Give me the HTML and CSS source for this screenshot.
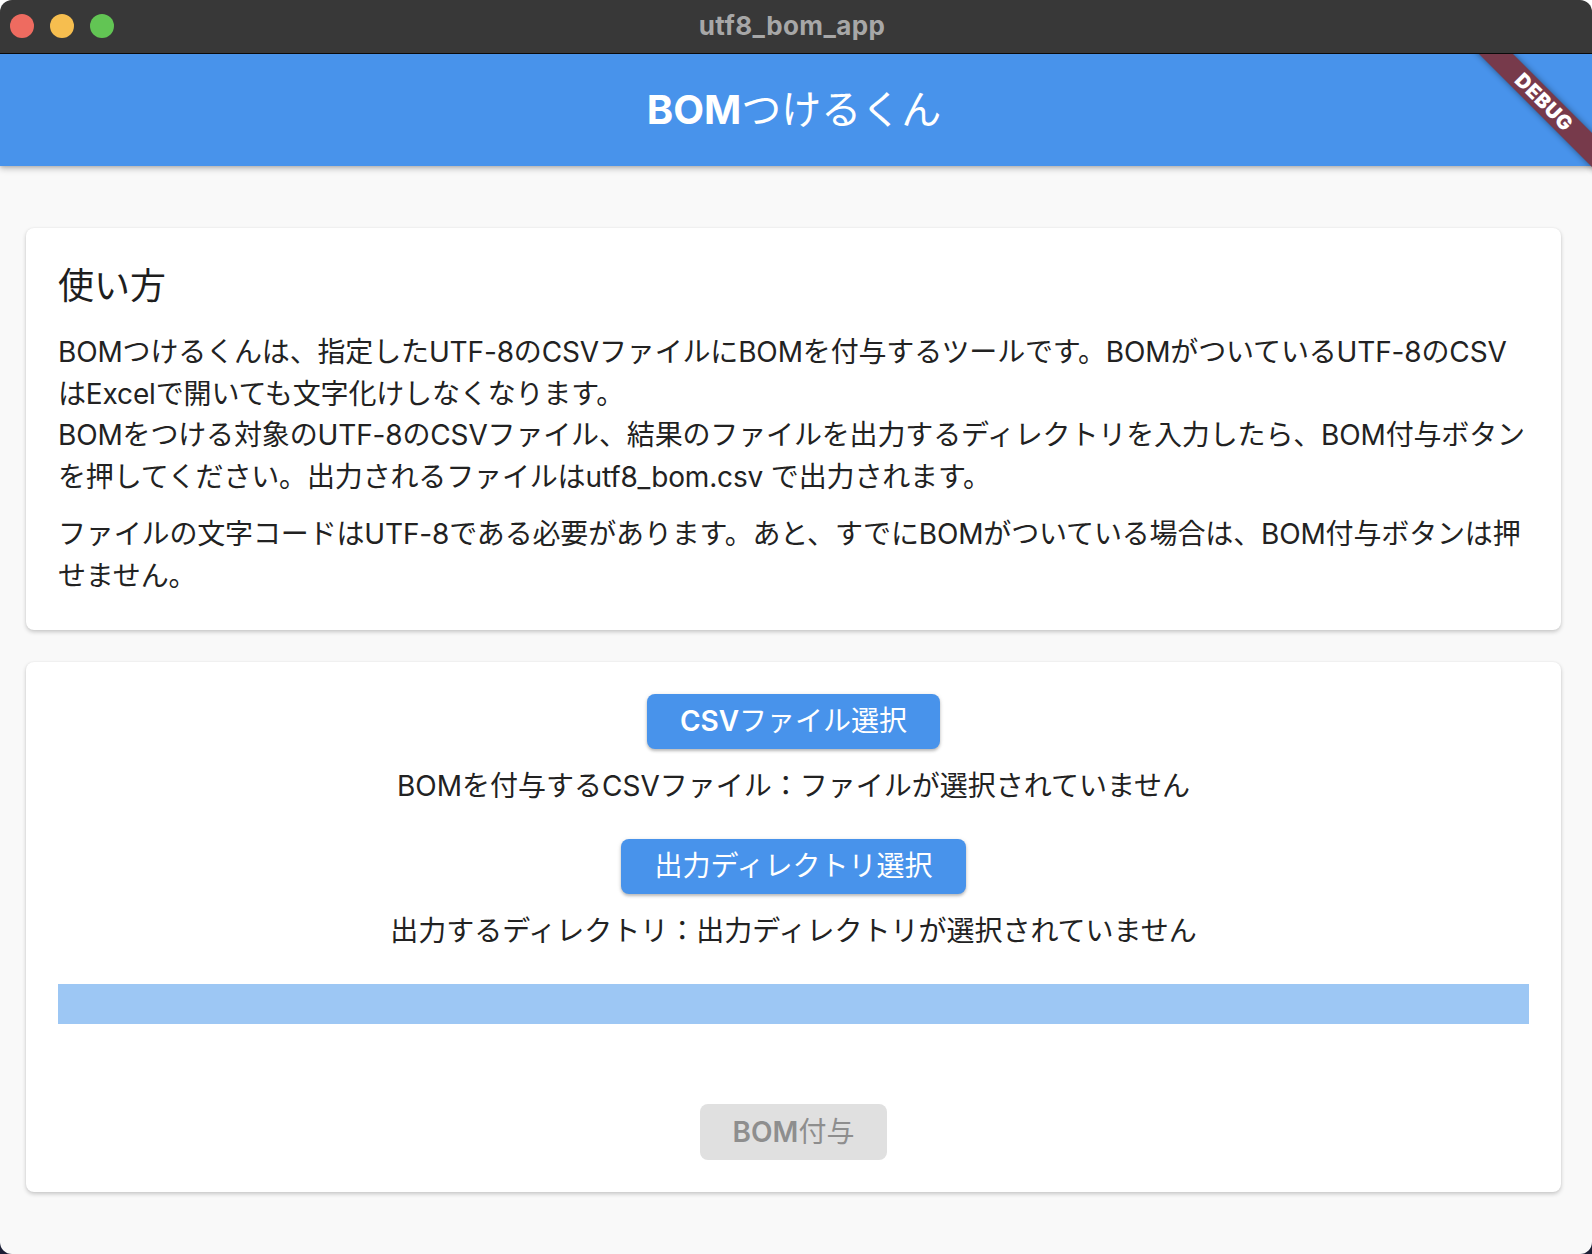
FILE: index.html
```html
<!DOCTYPE html>
<html lang="ja">
<head>
<meta charset="utf-8">
<title>utf8_bom_app</title>
<link rel="stylesheet" href="styles.css">
</head>
<body>
<div class="window">
  <div class="titlebar">
    <div class="lights">
      <span class="light red"></span>
      <span class="light yellow"></span>
      <span class="light green"></span>
    </div>
    <div class="window-title">utf8_bom_app</div>
  </div>
  <div class="app">
    <header class="appbar">
      <h1 class="appbar-title"><span class="latin-bold">BOM</span>つけるくん</h1>
    </header>
    <div class="debug-banner">DEBUG</div>
    <main class="content">
      <section class="card usage">
        <h2 class="usage-title">使い方</h2>
        <p class="usage-text">BOMつけるくんは、指定したUTF-8のCSVファイルにBOMを付与するツールです。BOMがついているUTF-8のCSV<br>はExcelで開いても文字化けしなくなります。<br>BOMをつける対象のUTF-8のCSVファイル、結果のファイルを出力するディレクトリを入力したら、BOM付与ボタン<br>を押してください。出力されるファイルはutf8_bom.csv で出力されます。</p>
        <p class="usage-text">ファイルの文字コードはUTF-8である必要があります。あと、すでにBOMがついている場合は、BOM付与ボタンは押<br>せません。</p>
      </section>
      <section class="card actions">
        <button class="btn btn-primary" type="button"><span class="latin-bold">CSV</span>ファイル選択</button>
        <p class="status">BOMを付与するCSVファイル：ファイルが選択されていません</p>
        <button class="btn btn-primary btn-second" type="button">出力ディレクトリ選択</button>
        <p class="status">出力するディレクトリ：出力ディレクトリが選択されていません</p>
        <div class="progress"><div class="progress-value" style="width:0%"></div></div>
        <button class="btn btn-disabled" type="button" disabled><span class="latin-bold">BOM</span>付与</button>
      </section>
    </main>
  </div>
</div>
</body>
</html>
```

FILE: styles.css
```css
* {
  box-sizing: border-box;
}

html, body {
  margin: 0;
  padding: 0;
  height: 100%;
}

body {
  background: linear-gradient(to bottom, #ffffff 50%, #1c1f36 50%);
  font-family: Inter, "Noto Sans CJK JP", sans-serif;
  color: #212121;
}

.window {
  width: 1592px;
  height: 1254px;
  border-radius: 12px;
  overflow: hidden;
  background: #f9f9f9;
  display: flex;
  flex-direction: column;
}

.titlebar {
  height: 54px;
  flex: 0 0 54px;
  background: #383838;
  border-bottom: 1px solid #0a0a0a;
  position: relative;
  display: flex;
  align-items: center;
  justify-content: center;
}

.lights {
  position: absolute;
  left: 10px;
  top: 14px;
  display: flex;
  gap: 16px;
}

.light {
  width: 24px;
  height: 24px;
  border-radius: 50%;
  display: block;
}

.red { background: #ee6b60; }
.yellow { background: #f6be4f; }
.green { background: #62c554; }

.window-title {
  font-family: Inter, "Noto Sans", sans-serif;
  font-weight: 700;
  font-size: 26px;
  letter-spacing: 0.4px;
  color: #a7a7a7;
  margin: -2px 8px 0 0;
}

.app {
  position: relative;
  flex: 1 1 auto;
  overflow: hidden;
  display: flex;
  flex-direction: column;
}

.appbar {
  height: 112px;
  flex: 0 0 112px;
  background: #4893eb;
  display: flex;
  align-items: center;
  justify-content: center;
  box-shadow: 0 3px 6px rgba(0, 0, 0, 0.22), 0 1px 3px rgba(0, 0, 0, 0.12);
  position: relative;
  z-index: 2;
}

.appbar-title {
  margin: 0 4px 0 0;
  font-size: 40px;
  font-weight: 400;
  color: #ffffff;
  line-height: 1;
}

.latin-bold {
  font-weight: 600;
}

.appbar-title .latin-bold {
  font-weight: 700;
}

.debug-banner {
  position: absolute;
  left: 1444px;
  top: 36px;
  width: 200px;
  height: 24px;
  transform: rotate(45deg);
  background: #773a4b;
  color: #ffffff;
  font-family: Inter, sans-serif;
  font-weight: 900;
  font-size: 20px;
  line-height: 24px;
  text-align: center;
  letter-spacing: 0.5px;
  box-shadow: 0 0 6px rgba(0, 0, 0, 0.45);
  z-index: 5;
}

.content {
  padding: 62px 31px 0 26px;
  display: flex;
  flex-direction: column;
  gap: 32px;
}

.card {
  background: #ffffff;
  border-radius: 8px;
  box-shadow: 0 2px 4px rgba(0, 0, 0, 0.2), 0 0 2px rgba(0, 0, 0, 0.06);
  padding: 32px;
}

.usage-title {
  margin: 0 0 19px;
  font-size: 36px;
  font-weight: 400;
  line-height: 53px;
  color: #1e1e1e;
}

.usage-text {
  margin: 0;
  font-size: 28px;
  line-height: 41.6px;
  letter-spacing: -0.15px;
  white-space: nowrap;
  color: #222222;
}

.usage-text + .usage-text {
  margin-top: 16px;
}

.actions {
  display: flex;
  flex-direction: column;
  align-items: center;
}

.btn {
  height: 55px;
  padding: 0 33px;
  border: none;
  border-radius: 8px;
  font-family: Inter, "Noto Sans CJK JP", sans-serif;
  font-size: 28px;
  line-height: 1;
  font-weight: 400;
  cursor: pointer;
}

.btn-primary {
  background: #4893eb;
  color: #ffffff;
  box-shadow: 0 2px 3px rgba(0, 0, 0, 0.22), 0 1px 5px rgba(0, 0, 0, 0.1);
}

.btn-second {
  margin-top: 32px;
}

.btn-disabled {
  margin-top: 80px;
  height: 56px;
  background: #e0e0e0;
  color: #8e8e8e;
  cursor: default;
}

.status {
  margin: 16px 0 0;
  font-size: 28px;
  line-height: 42px;
  color: #222222;
  text-align: center;
}

.progress {
  margin-top: 32px;
  align-self: stretch;
  height: 40px;
  background: #9dc7f4;
}

.progress-value {
  height: 100%;
  background: #4893eb;
}
```
